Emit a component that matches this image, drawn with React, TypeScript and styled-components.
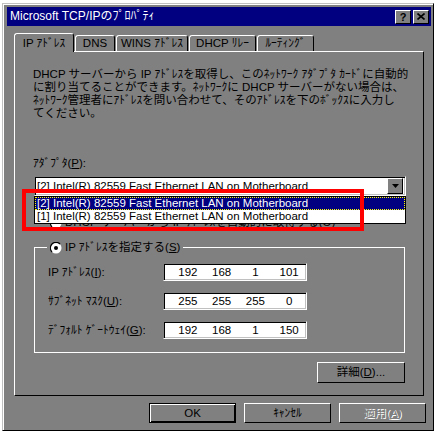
import React from "react";
import styled, { createGlobalStyle, css } from "styled-components";

const FACE = "#808080";

const Global = createGlobalStyle`
  html, body { margin: 0; padding: 0; background: #fff; }
  body {
    font-family: "Liberation Sans", "Noto Sans CJK JP", sans-serif;
    font-size: 11.5px;
    line-height: 13px;
    color: #000;
  }
  * { box-sizing: border-box; }
`;

const Window = styled.div`
  margin: 3px 0 0 2px;
  width: 432px;
  height: 428px;
  background: ${FACE};
  border: 1px solid;
  border-color: #c0c0c0 #000 #000 #c0c0c0;
  box-shadow: inset 1px 1px #fff;
  padding: 3px 2px 0 4px;
  display: flex;
  flex-direction: column;
`;

const TitleBar = styled.div`
  flex: none;
  height: 19px;
  background: #000080;
  color: #fff;
  display: flex;
  align-items: center;
  padding: 0 2px 0 3px;
  font-size: 12px;
`;

const TitleText = styled.span`
  flex: 1;
  white-space: nowrap;
`;

const CaptionButton = styled.div`
  width: 16px;
  height: 14px;
  margin-left: 2px;
  background: ${FACE};
  border: 1px solid;
  border-color: #fff #000 #000 #fff;
  display: flex;
  align-items: center;
  justify-content: center;
  color: #000;
  font-weight: bold;
  font-size: 11px;
  line-height: 12px;
`;

const Body = styled.div`
  flex: 1;
  display: flex;
  flex-direction: column;
  padding: 7px 7px 0 7px;
`;

const TabStrip = styled.div`
  flex: none;
  height: 18px;
  display: flex;
  align-items: flex-end;
  position: relative;
  z-index: 1;
`;

const Tab = styled.div<{ $active?: boolean; $w: number }>`
  width: ${(p) => p.$w}px;
  height: ${(p) => (p.$active ? 19 : 16)}px;
  margin-bottom: ${(p) => (p.$active ? -1 : 0)}px;
  margin-right: 1px;
  background: ${FACE};
  border: 1px solid;
  border-bottom: none;
  border-color: #fff #000 transparent #fff;
  border-radius: 3px 3px 0 0;
  display: flex;
  align-items: center;
  justify-content: center;
  white-space: nowrap;
`;

const Panel = styled.div`
  position: relative;
  flex: none;
  height: 345px;
  border: 1px solid;
  border-color: #fff #000 #000 #fff;
  display: flex;
  flex-direction: column;
  padding: 16px 17px 0 18px;
`;

const Paragraph = styled.div`
  white-space: nowrap;
`;

const Line = styled.div`
  height: 13px;
`;

const FieldLabel = styled.div`
  margin-top: 37px;
  white-space: nowrap;
`;

const ComboWrap = styled.div`
  position: relative;
  margin: 6px 0 0 1px;
`;

const Combo = styled.div`
  height: 20px;
  background: #fff;
  border: 1px solid;
  border-color: #808080 #fff #fff #808080;
  box-shadow: inset 1px 1px #000, inset -1px -1px #c0c0c0;
  display: flex;
  align-items: center;
  padding: 0 2px 0 2px;
  white-space: nowrap;
`;

const ComboText = styled.span`
  flex: 1;
  overflow: hidden;
`;

const DropButton = styled.div`
  width: 16px;
  height: 16px;
  background: ${FACE};
  border: 1px solid;
  border-color: #fff #000 #000 #fff;
  display: flex;
  align-items: center;
  justify-content: center;
`;

const DropList = styled.div`
  position: absolute;
  left: 0;
  right: 0;
  top: 20px;
  background: #fff;
  border: 1px solid #000;
  z-index: 2;
`;

const ListItem = styled.div<{ $selected?: boolean }>`
  height: 13px;
  line-height: 13px;
  padding-left: 2px;
  white-space: nowrap;
  ${(p) =>
    p.$selected &&
    css`
      background: #000080;
      color: #fff;
      outline: 1px dotted #ffff00;
      outline-offset: -1px;
    `}
`;

const RadioRow = styled.div`
  margin: 20px 0 0 17px;
  display: flex;
  align-items: center;
  gap: 3px;
  height: 13px;
  white-space: nowrap;
`;

const Group = styled.fieldset`
  margin: 12px 1px 0 1px;
  padding: 0 12px 13px 12px;
  border: 1px solid #fff;
  min-inline-size: 0;
  display: flex;
  flex-direction: column;
  gap: 11px;
`;

const Legend = styled.legend`
  padding: 0 3px;
  height: 13px;
  line-height: 13px;
`;

const LegendInner = styled.span`
  display: inline-flex;
  align-items: center;
  gap: 3px;
  white-space: nowrap;
`;

const Row = styled.div<{ $first?: boolean }>`
  display: flex;
  align-items: center;
  height: 18px;
  margin-top: ${(p) => (p.$first ? 9 : 0)}px;
`;

const RowLabel = styled.div`
  width: 116px;
  padding-left: 1px;
  white-space: nowrap;
`;

const IpField = styled.div`
  width: 144px;
  height: 18px;
  background: #fff;
  border: 1px solid;
  border-color: #808080 #fff #fff #808080;
  box-shadow: inset 1px 1px #000, inset -1px -1px #c0c0c0;
  display: flex;
  align-items: center;
  padding-left: 7px;
`;

const Octet = styled.span`
  width: 35px;
  text-align: center;
`;

const Button = styled.div<{ $w: number; $default?: boolean; $disabled?: boolean }>`
  width: ${(p) => p.$w}px;
  height: ${(p) => (p.$default ? 20 : 20)}px;
  background: ${FACE};
  border: 1px solid;
  border-color: #fff #000 #000 #fff;
  display: flex;
  align-items: center;
  justify-content: center;
  white-space: nowrap;
  ${(p) =>
    p.$default &&
    css`
      border-color: #000;
      box-shadow: inset 1px 1px #fff, inset -1px -1px #000;
    `}
  ${(p) =>
    p.$disabled &&
    css`
      color: #808080;
      text-shadow: 1px 1px #fff;
    `}
`;

const DetailButton = styled(Button)`
  align-self: flex-end;
  margin: 9px 1px 0 0;
  height: 21px;
`;

const ButtonRow = styled.div`
  display: flex;
  justify-content: flex-end;
  gap: 8px;
  margin: 7px -2px 0 0;
`;

const Annotation = styled.div`
  position: absolute;
  left: 7px;
  top: 137px;
  width: 342px;
  height: 42px;
  border: 4px solid #ff0000;
  z-index: 3;
  pointer-events: none;
`;

const Radio = ({ checked }: { checked?: boolean }) => (
  <svg width="12" height="12" viewBox="0 0 12 12">
    <circle cx="6" cy="6" r="5.5" fill="#fff" />
    <path d="M2 10 A5.6 5.6 0 0 1 10 2" stroke="#000" strokeWidth="1.2" fill="none" />
    {checked && <circle cx="6" cy="6" r="2" fill="#000" />}
  </svg>
);

const Arrow = () => (
  <svg width="7" height="4" viewBox="0 0 7 4">
    <polygon points="0,0 7,0 3.5,4" fill="#000" />
  </svg>
);

const CloseGlyph = () => (
  <svg width="8" height="7" viewBox="0 0 8 7">
    <path d="M0.5 0.5 L7.5 6.5 M7.5 0.5 L0.5 6.5" stroke="#000" strokeWidth="1.6" />
  </svg>
);

const ADAPTER = "Intel(R) 82559 Fast Ethernet LAN on Motherboard";

const tabs = [
  { label: "IP ｱﾄﾞﾚｽ", w: 60, active: true },
  { label: "DNS", w: 40 },
  { label: "WINS ｱﾄﾞﾚｽ", w: 72 },
  { label: "DHCP ﾘﾚｰ", w: 67 },
  { label: "ﾙｰﾃｨﾝｸﾞ", w: 57 },
];

const rows = [
  { label: "IP ｱﾄﾞﾚｽ", key: "I", values: ["192", "168", "1", "101"] },
  { label: "ｻﾌﾞﾈｯﾄ ﾏｽｸ", key: "U", values: ["255", "255", "255", "0"] },
  { label: "ﾃﾞﾌｫﾙﾄ ｹﾞｰﾄｳｪｲ", key: "G", values: ["192", "168", "1", "150"] },
];

export default function App() {
  return (
    <>
      <Global />
      <Window>
        <TitleBar>
          <TitleText>Microsoft TCP/IPのﾌﾟﾛﾊﾟﾃｨ</TitleText>
          <CaptionButton>?</CaptionButton>
          <CaptionButton>
            <CloseGlyph />
          </CaptionButton>
        </TitleBar>
        <Body>
          <TabStrip>
            {tabs.map((t) => (
              <Tab key={t.label} $w={t.w} $active={t.active}>
                {t.label}
              </Tab>
            ))}
          </TabStrip>
          <Panel>
            <Paragraph>
              <Line>DHCP サーバーから IP ｱﾄﾞﾚｽを取得し、このﾈｯﾄﾜｰｸ ｱﾀﾞﾌﾟﾀ ｶｰﾄﾞに自動的</Line>
              <Line>に割り当てることができます。ﾈｯﾄﾜｰｸに DHCP サーバーがない場合は、</Line>
              <Line>ﾈｯﾄﾜｰｸ管理者にｱﾄﾞﾚｽを問い合わせて、そのｱﾄﾞﾚｽを下のﾎﾞｯｸｽに入力し</Line>
              <Line>てください。</Line>
            </Paragraph>
            <FieldLabel>
              ｱﾀﾞﾌﾟﾀ(<u>P</u>):
            </FieldLabel>
            <ComboWrap>
              <Combo>
                <ComboText>[2] {ADAPTER}</ComboText>
                <DropButton>
                  <Arrow />
                </DropButton>
              </Combo>
              <DropList>
                <ListItem $selected>[2] {ADAPTER}</ListItem>
                <ListItem>[1] {ADAPTER}</ListItem>
              </DropList>
            </ComboWrap>
            <RadioRow>
              <Radio />
              <span>
                DHCP サーバーから IP ｱﾄﾞﾚｽを自動的に取得する(<u>O</u>)
              </span>
            </RadioRow>
            <Group>
              <Legend>
                <LegendInner>
                  <Radio checked />
                  <span>
                    IP ｱﾄﾞﾚｽを指定する(<u>S</u>)
                  </span>
                </LegendInner>
              </Legend>
              {rows.map((r, i) => (
                <Row key={r.key} $first={i === 0}>
                  <RowLabel>
                    {r.label}(<u>{r.key}</u>):
                  </RowLabel>
                  <IpField>
                    {r.values.map((v, j) => (
                      <Octet key={j}>{v}</Octet>
                    ))}
                  </IpField>
                </Row>
              ))}
            </Group>
            <DetailButton $w={88}>
              詳細(<u>D</u>)...
            </DetailButton>
            <Annotation />
          </Panel>
          <ButtonRow>
            <Button $w={87} $default>
              OK
            </Button>
            <Button $w={87}>ｷｬﾝｾﾙ</Button>
            <Button $w={87} $disabled>
              適用(<u>A</u>)
            </Button>
          </ButtonRow>
        </Body>
      </Window>
    </>
  );
}
